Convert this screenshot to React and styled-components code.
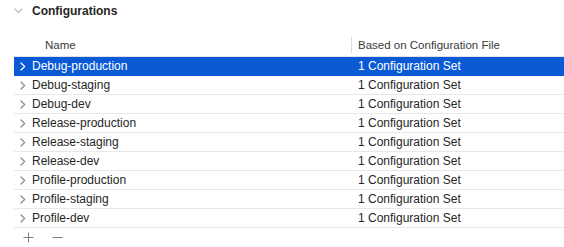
import React, { useState } from "react";
import styled, { createGlobalStyle } from "styled-components";

const GlobalStyle = createGlobalStyle`
  html, body {
    margin: 0;
    padding: 0;
    background: #ffffff;
  }
  body {
    font-family: "Liberation Sans", Arial, sans-serif;
    color: #262626;
    -webkit-font-smoothing: antialiased;
  }
`;

const configs = [
  "Debug-production",
  "Debug-staging",
  "Debug-dev",
  "Release-production",
  "Release-staging",
  "Release-dev",
  "Profile-production",
  "Profile-staging",
  "Profile-dev",
];

function ChevronRight({ color }) {
  return (
    <svg width="6" height="9" viewBox="0 0 6 9">
      <path
        d="M1 1 L4.6 4.5 L1 8"
        fill="none"
        stroke={color}
        strokeWidth="1.3"
        strokeLinecap="round"
        strokeLinejoin="round"
      />
    </svg>
  );
}

function ChevronDown() {
  return (
    <svg width="9" height="6" viewBox="0 0 9 6">
      <path
        d="M1 1 L4.5 4.6 L8 1"
        fill="none"
        stroke="#b4b4b4"
        strokeWidth="1.1"
        strokeLinecap="round"
        strokeLinejoin="round"
      />
    </svg>
  );
}

function PlusIcon() {
  return (
    <svg width="11" height="11" viewBox="0 0 11 11">
      <path d="M5.5 0.5 V10.5 M0.5 5.5 H10.5" stroke="#7d7d7d" strokeWidth="1" />
    </svg>
  );
}

function MinusIcon() {
  return (
    <svg width="11" height="11" viewBox="0 0 11 11">
      <path d="M0.5 5.5 H10.5" stroke="#7d7d7d" strokeWidth="1" />
    </svg>
  );
}

export default function App() {
  const [selected, setSelected] = useState(0);

  return (
    <>
      <GlobalStyle />
      <Page>
        <SectionHeader>
          <ChevronDown />
          <SectionTitle>Configurations</SectionTitle>
        </SectionHeader>
        <Table>
          <HeadRow>
            <HeadCell $pad={31}>Name</HeadCell>
            <HeadCell $pad={6} $divider>
              Based on Configuration File
            </HeadCell>
          </HeadRow>
          {configs.map((name, i) => (
            <Row
              key={name}
              $selected={selected === i}
              onClick={() => setSelected(i)}
            >
              <NameCell>
                <ChevronRight color={selected === i ? "#ffffff" : "#8c8c8c"} />
                <span>{name}</span>
              </NameCell>
              <Cell>1 Configuration Set</Cell>
            </Row>
          ))}
        </Table>
        <Footer>
          <ToolButton aria-label="Add">
            <PlusIcon />
          </ToolButton>
          <ToolButton aria-label="Remove">
            <MinusIcon />
          </ToolButton>
        </Footer>
      </Page>
    </>
  );
}

const Page = styled.div`
  width: 564px;
  height: 247px;
  display: flex;
  flex-direction: column;
  overflow: hidden;
`;

const SectionHeader = styled.div`
  height: 21px;
  display: flex;
  align-items: center;
  gap: 9px;
  padding-left: 14px;
  svg {
    margin-top: 1px;
  }
`;

const SectionTitle = styled.div`
  font-size: 12px;
  font-weight: 700;
  color: #262626;
`;

const Table = styled.div`
  margin-top: 14px;
  margin-left: 14px;
  display: flex;
  flex-direction: column;
`;

const HeadRow = styled.div`
  height: 22px;
  box-sizing: border-box;
  border-bottom: 1px solid #e3e3e3;
  display: grid;
  grid-template-columns: 337px 1fr;
  align-items: center;
`;

const HeadCell = styled.div`
  font-size: 11.5px;
  color: #3a3a3a;
  padding-left: ${(p) => p.$pad}px;
  border-left: ${(p) => (p.$divider ? "1px solid #dcdcdc" : "none")};
  line-height: 16px;
  margin-top: -2px;
`;

const Row = styled.div`
  height: 19px;
  box-sizing: border-box;
  display: grid;
  grid-template-columns: 337px 1fr;
  align-items: center;
  font-size: 12px;
  background: ${(p) => (p.$selected ? "#0a5ad6" : "transparent")};
  color: ${(p) => (p.$selected ? "#ffffff" : "#262626")};
  border-bottom: 1px solid ${(p) => (p.$selected ? "#0a5ad6" : "#e8e8e8")};
  cursor: default;
`;

const NameCell = styled.div`
  display: flex;
  align-items: center;
  gap: 6px;
  padding-left: 6px;
`;

const Cell = styled.div`
  padding-left: 7px;
`;

const Footer = styled.div`
  height: 19px;
  display: flex;
  align-items: center;
  gap: 18px;
  padding-left: 23px;
`;

const ToolButton = styled.button`
  background: none;
  border: none;
  padding: 0;
  display: flex;
  align-items: center;
  justify-content: center;
  width: 11px;
  height: 11px;
`;
